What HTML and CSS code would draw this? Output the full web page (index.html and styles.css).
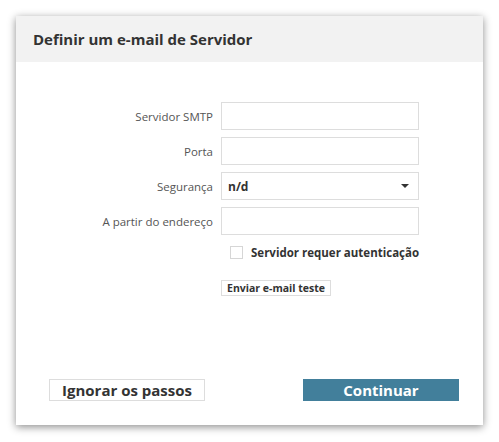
FILE: index.html
```html
<!DOCTYPE html>
<html lang="pt">
<head>
<meta charset="utf-8">
<title>Definir um e-mail de Servidor</title>
<link rel="stylesheet" href="styles.css">
</head>
<body>
<div class="dialog">
  <div class="header">
    <h1 class="title">Definir um e-mail de Servidor</h1>
  </div>
  <div class="body">
    <form class="form">
      <label class="label">Servidor SMTP</label>
      <input class="field" type="text">
      <label class="label">Porta</label>
      <input class="field" type="text">
      <label class="label">Segurança</label>
      <div class="select">
        <span class="select-value">n/d</span>
        <span class="caret"></span>
      </div>
      <label class="label">A partir do endereço</label>
      <input class="field" type="text">
      <div class="check-row">
        <span class="checkbox"></span>
        <span class="check-text">Servidor requer autenticação</span>
      </div>
      <div class="test-row">
        <button type="button" class="test-btn">Enviar e-mail teste</button>
      </div>
    </form>
  </div>
  <div class="footer">
    <button type="button" class="btn btn-skip">Ignorar os passos</button>
    <button type="button" class="btn btn-continue">Continuar</button>
  </div>
</div>
</body>
</html>
```

FILE: styles.css
```css
html, body {
  margin: 0;
  padding: 0;
  background: #ffffff;
}
body {
  font-family: "Open Sans", "Liberation Sans", sans-serif;
  color: #333;
  padding: 16px 0 0 16px;
  height: 442px;
  box-sizing: border-box;
}
.dialog {
  width: 467px;
  height: 409px;
  background: #fff;
  box-shadow: 0 2px 8px rgba(0, 0, 0, 0.45);
  display: flex;
  flex-direction: column;
}
.header {
  height: 46px;
  background: #f2f2f2;
  display: flex;
  align-items: center;
  padding-left: 17px;
}
.title {
  margin: 0;
  font-size: 15px;
  font-weight: 700;
  color: #333;
}
.body {
  flex: 1;
  padding-top: 40px;
}
.form {
  display: grid;
  grid-template-columns: 197px 198px;
  column-gap: 8px;
  row-gap: 7px;
  margin: 0;
}
.label {
  font-size: 11.5px;
  color: #555;
  text-align: right;
  align-self: center;
}
.field {
  box-sizing: border-box;
  height: 28px;
  width: 198px;
  border: 1px solid #ddd;
  margin: 0;
  padding: 0 6px;
  background: #fff;
  font-family: inherit;
}
.select {
  box-sizing: border-box;
  height: 28px;
  border: 1px solid #ddd;
  display: flex;
  align-items: center;
  justify-content: space-between;
  padding: 0 9px 0 6px;
}
.select-value {
  font-size: 12px;
  font-weight: 700;
  color: #333;
}
.caret {
  width: 0;
  height: 0;
  border-left: 4px solid transparent;
  border-right: 4px solid transparent;
  border-top: 4px solid #333;
}
.check-row {
  grid-column: 2;
  display: flex;
  align-items: center;
  padding-left: 9px;
  margin-top: 3px;
  white-space: nowrap;
}
.checkbox {
  box-sizing: border-box;
  flex: 0 0 13px;
  width: 13px;
  height: 13px;
  border: 1px solid #d6d6d6;
  background: #fff;
  margin-right: 8px;
}
.check-text {
  font-size: 11.5px;
  font-weight: 700;
  color: #333;
}
.test-row {
  grid-column: 2;
  margin-top: 8px;
}
.test-btn {
  box-sizing: border-box;
  height: 16px;
  width: 110px;
  padding: 0;
  border: 1px solid #ddd;
  background: #fff;
  font-family: inherit;
  font-size: 10.5px;
  font-weight: 700;
  color: #333;
  line-height: 14px;
}
.footer {
  display: flex;
  justify-content: space-between;
  padding: 0 24px 24px 33px;
}
.btn {
  box-sizing: border-box;
  width: 156px;
  height: 22px;
  font-family: inherit;
  font-size: 15px;
  font-weight: 700;
  padding: 0;
  line-height: 20px;
}
.btn-skip {
  background: #fff;
  border: 1px solid #ddd;
  color: #333;
}
.btn-continue {
  background: #427f9b;
  border: 1px solid #427f9b;
  color: #fff;
}
```
